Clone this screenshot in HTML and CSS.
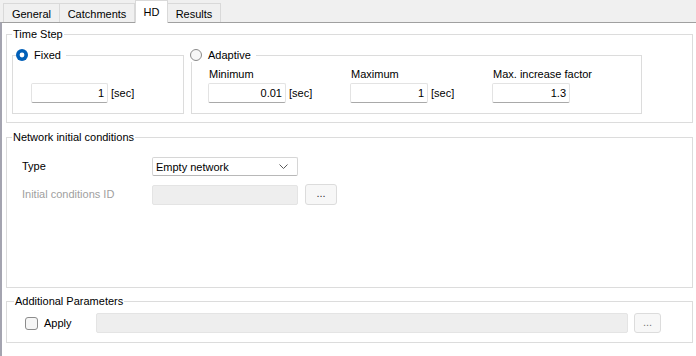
FILE: index.html
```html
<!DOCTYPE html>
<html>
<head>
<meta charset="utf-8">
<link rel="stylesheet" href="styles.css">
</head>
<body>
<div class="tabbar">
  <div class="tab t-general">General</div>
  <div class="tab t-catch">Catchments</div>
  <div class="tab t-hd">HD</div>
  <div class="tab t-results">Results</div>
</div>
<div class="panel">
  <fieldset class="group timestep">
    <legend>Time Step</legend>
    <div class="ts-row">
      <fieldset class="sub fixed">
        <legend><span class="radio"><svg width="12" height="12" viewBox="0 0 12 12"><circle cx="6" cy="6" r="6" fill="#005fb8"/><circle cx="6" cy="6" r="2.4" fill="#fff"/></svg></span><span>Fixed</span></legend>
        <div class="field"><div class="input fixed-in">1</div><span class="unit">[sec]</span></div>
      </fieldset>
      <fieldset class="sub adaptive">
        <legend><span class="radio"><svg width="12" height="12" viewBox="0 0 12 12"><circle cx="6" cy="6" r="5.5" fill="#f7f7f7" stroke="#8a8a8a" stroke-width="1"/></svg></span><span>Adaptive</span></legend>
        <div class="cols">
          <div class="col">
            <div class="lbl">Minimum</div>
            <div class="field"><div class="input">0.01</div><span class="unit">[sec]</span></div>
          </div>
          <div class="col">
            <div class="lbl">Maximum</div>
            <div class="field"><div class="input">1</div><span class="unit">[sec]</span></div>
          </div>
          <div class="col">
            <div class="lbl">Max. increase factor</div>
            <div class="field"><div class="input">1.3</div></div>
          </div>
        </div>
      </fieldset>
    </div>
  </fieldset>

  <fieldset class="group network">
    <legend>Network initial conditions</legend>
    <div class="row row1">
      <span class="rlabel">Type</span>
      <div class="select"><span>Empty network</span><svg width="9" height="5" viewBox="0 0 9 5"><polyline points="0.5,0.5 4.5,4.5 8.5,0.5" fill="none" stroke="#5a5a5a" stroke-width="1"/></svg></div>
    </div>
    <div class="row row2">
      <span class="rlabel disabled">Initial conditions ID</span>
      <div class="dis small"></div>
      <div class="btn">...</div>
    </div>
  </fieldset>

  <fieldset class="group additional">
    <legend>Additional Parameters</legend>
    <div class="row row3">
      <div class="chk-area"><span class="checkbox"></span><span class="apply">Apply</span></div>
      <div class="dis wide"></div>
      <div class="btn btn2">...</div>
    </div>
  </fieldset>
</div>
</body>
</html>
```

FILE: styles.css
```css
html, body {
  margin: 0;
  padding: 0;
}
body {
  width: 696px;
  height: 356px;
  overflow: hidden;
  background: #ffffff;
  color: #000;
  font-family: "Liberation Sans", Arial, sans-serif;
  font-size: 11px;
}

/* Tabs */
.tabbar {
  display: flex;
  align-items: flex-end;
  height: 22px;
  background: #f0f0f0;
  padding-left: 3px;
}
.tab {
  box-sizing: border-box;
  height: 19px;
  border: 1px solid #d9d9d9;
  border-bottom: none;
  background: #f0f0f0;
  text-align: center;
  padding-top: 4px;
  line-height: 13px;
  color: #000;
}
.t-general { width: 57px; }
.t-catch { width: 76px; margin-left: -1px; }
.t-hd {
  width: 33px;
  height: 23px;
  margin-bottom: -1px;
  background: #ffffff;
  position: relative;
  z-index: 1;
  padding-top: 5px;
}
.t-results { width: 54px; margin-left: -1px; }

/* Panel */
.panel {
  box-sizing: border-box;
  height: 334px;
  border-top: 1px solid #a0a0a0;
  border-left: 2px solid #a4a4b0;
  padding: 0 3px 0 4px;
  background: #ffffff;
}

fieldset {
  margin: 0;
  min-width: 0;
  border: 1px solid #dcdcdc;
}
legend {
  line-height: 15px;
  padding: 0 1px;
}

.timestep {
  margin-top: 4px;
  padding: 6px 0 8px 5px;
}
.ts-row {
  display: flex;
  align-items: stretch;
}
.sub legend {
  display: flex;
  align-items: center;
  gap: 6px;
  line-height: 14px;
  padding: 0 5px 0 0;
}
.radio {
  display: block;
  width: 12px;
  height: 12px;
}
.radio svg { display: block; }

.fixed {
  box-sizing: border-box;
  width: 172px;
  padding: 21px 0 10px 18px;
}
.fixed legend { margin-left: -15px; }

.adaptive {
  box-sizing: border-box;
  width: 451px;
  margin-left: 7px;
  padding: 6px 0 10px 16px;
}
.adaptive legend { margin-left: -18px; }

.cols {
  display: grid;
  grid-template-columns: 142px 142px 142px;
}
.lbl {
  line-height: 13px;
  padding-left: 1px;
  margin-bottom: 2px;
}

.field {
  display: flex;
  align-items: center;
  gap: 3px;
}
.input {
  box-sizing: border-box;
  width: 78px;
  height: 20px;
  border: 1px solid #e3e3e3;
  border-bottom-color: #a9a9a9;
  border-radius: 2px;
  background: #fff;
  text-align: right;
  padding-right: 3px;
  line-height: 18px;
}
.fixed-in { width: 77px; }
.unit { line-height: 13px; }

/* Network */
.network {
  margin-top: 7px;
  padding: 12px 0 82px 15px;
}
.network legend { margin-left: -10px; }
.row {
  display: flex;
  align-items: center;
}
.row1 { height: 19px; }
.row2 { height: 21px; margin-top: 8px; }
.rlabel {
  width: 130px;
  line-height: 13px;
}
.disabled { color: #a0a0a0; }
.select {
  box-sizing: border-box;
  width: 146px;
  height: 19px;
  border: 1px solid #d6d6d6;
  border-bottom-color: #b8b8b8;
  border-radius: 2px;
  background: #fff;
  display: flex;
  align-items: center;
  justify-content: space-between;
  padding: 0 9px 0 3px;
}
.select svg { display: block; }
.dis {
  box-sizing: border-box;
  height: 20px;
  background: #eeeeee;
  border: 1px solid #e4e4e4;
  border-radius: 2px;
}
.small { width: 146px; }
.btn {
  box-sizing: border-box;
  width: 32px;
  height: 21px;
  margin-left: 7px;
  border: 1px solid #dcdcdc;
  border-radius: 3px;
  background: #f7f7f7;
  text-align: center;
  line-height: 17px;
  color: #333;
}

/* Additional */
.additional {
  margin-top: 6px;
  padding: 4px 31px 9px 18px;
}
.additional legend { margin-left: -11px; }
.row3 { height: 20px; }
.chk-area {
  width: 71px;
  display: flex;
  align-items: center;
}
.checkbox {
  box-sizing: border-box;
  display: block;
  width: 13px;
  height: 13px;
  border: 1px solid #8c8c8c;
  border-radius: 3px;
  background: #f6f6f6;
}
.apply {
  margin-left: 6px;
  line-height: 13px;
}
.wide { flex: 1; }
.btn2 {
  width: 27px;
  height: 20px;
  margin-left: 6px;
  color: #777;
  line-height: 16px;
}
```
